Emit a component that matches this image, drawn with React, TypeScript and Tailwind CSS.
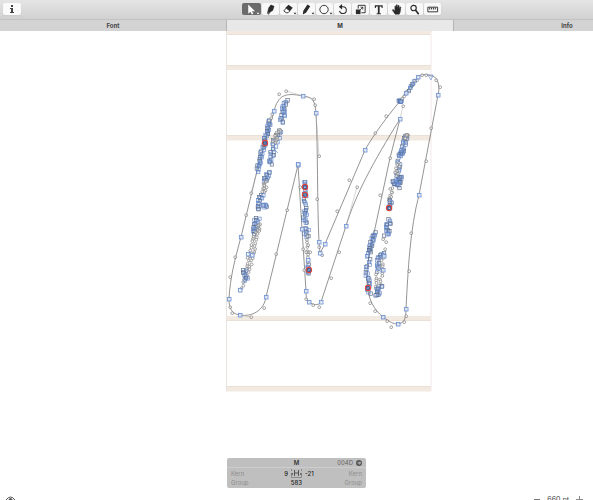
import { useState } from "react";
import type { ReactNode } from "react";

type Point = [number, number];

type Cluster = {
    path: Point[];
    count: number;
    spread: number;
    round?: boolean;
};

const OUTLINE =
    "M229 299C229 309 232 314 240 315C251 317 264 311 266 297L298 165L302 229L306 291C306 299 307 301 309 302" +
    "C313 305 318 306 321 302L346 226C355 196 373 162 400 119L390 158L374 233C371 248 366 265 367 283" +
    "C368 299 374 310 383 317C390 322 393 324 398 324C405 323 406 317 406 309C408 270 410 229 419 195L438 95" +
    "C441 84 436 75 431 76C425 73 420 75 418 77C411 84 406 93 400 101C387 117 374 134 365 150L325 244L320 253L319 242" +
    "C317 200 318 150 316 113C315 101 313 97 303 96C284 92 278 96 274 111L257 171L241 237C235 259 230 278 229 299Z";

const HANDLES = "M303 96L314 99M240 315L251 317M346 226L357 187M400 119L403 106M257 171L251 193M316 113L319 156M278 96L279 94M286 91L303 96";

const SQUARES: Point[] = [
    [229, 299], [240, 315], [266, 297], [302, 229], [306, 291], [309, 302], [321, 302],
    [346, 226], [400, 119], [383, 317], [398, 324], [406, 309], [419, 195], [438, 95],
    [418, 77], [365, 150], [325, 244], [320, 253], [319, 242], [316, 113], [303, 96],
    [274, 111], [241, 237], [240, 290], [252, 255], [248, 254], [308, 260], [383, 270],
    [384, 256], [406, 93], [298, 165], [298, 164],
];

const CIRCLES: Point[] = [
    [279, 94], [286, 91], [314, 99], [315, 105], [319, 156], [317, 199], [319, 247], [322, 255],
    [251, 193], [246, 215], [235, 257], [230, 277], [230, 307], [232, 313], [251, 317], [264, 308],
    [276, 254], [287, 210], [300, 187], [303, 249], [304, 270], [306, 299], [313, 305], [319, 307],
    [331, 278], [339, 252], [357, 187], [337, 211], [349, 180], [375, 133], [386, 116], [403, 106],
    [390, 158], [380, 195], [370, 303], [375, 311], [387, 321], [391, 327], [404, 322], [406, 316],
    [409, 271], [411, 233], [426, 161], [431, 128], [440, 87], [436, 80], [422, 75], [426, 75],
    [272, 114], [271, 118], [383, 239], [386, 242], [385, 249], [308, 245], [308, 252], [306, 252],
    [310, 252], [383, 317],
];

const CLUSTERS: Cluster[] = [
    // left stem, outer edge
    { path: [[270, 121], [264, 144], [257, 171]], count: 42, spread: 3 },
    // left stem, inner strokes
    { path: [[285, 101], [281, 122]], count: 20, spread: 5 },
    { path: [[279, 130], [273, 148], [269, 164]], count: 25, spread: 6 },
    { path: [[279, 130], [274, 142]], count: 14, spread: 5, round: true },
    { path: [[268, 172], [264, 182]], count: 11, spread: 5 },
    { path: [[266, 182], [262, 192]], count: 10, spread: 5, round: true },
    { path: [[261, 194], [258, 209]], count: 13, spread: 5 },
    { path: [[264, 206], [267, 206]], count: 5, spread: 3 },
    { path: [[257, 217], [255, 233]], count: 16, spread: 6 },
    { path: [[260, 224], [257, 232]], count: 8, spread: 3, round: true },
    { path: [[253, 236], [242, 288]], count: 20, spread: 2, round: true },
    { path: [[258, 231], [247, 278]], count: 17, spread: 2, round: true },
    { path: [[245, 269], [246, 280]], count: 9, spread: 6 },
    // middle
    { path: [[305, 182], [305, 207]], count: 13, spread: 3 },
    { path: [[305, 209], [305, 223]], count: 11, spread: 4 },
    { path: [[306, 228], [306, 237]], count: 8, spread: 5 },
    { path: [[307, 235], [308, 262]], count: 8, spread: 1, round: true },
    { path: [[308, 265], [308, 274]], count: 7, spread: 2 },
    // right arm
    { path: [[399, 101], [402, 101]], count: 9, spread: 3 },
    { path: [[402, 98], [418, 77]], count: 11, spread: 1, round: true },
    { path: [[409, 90], [414, 82]], count: 6, spread: 1 },
    // right stem, inner strokes
    { path: [[406, 135], [403, 150], [400, 156]], count: 24, spread: 4 },
    { path: [[406, 134], [405, 139]], count: 10, spread: 4, round: true },
    { path: [[399, 160], [397, 176]], count: 8, spread: 4 },
    { path: [[398, 162], [396, 178]], count: 9, spread: 4, round: true },
    { path: [[403, 176], [396, 184], [393, 181]], count: 17, spread: 5 },
    { path: [[400, 178], [399, 187]], count: 7, spread: 3 },
    { path: [[392, 188], [390, 205]], count: 11, spread: 4, round: true },
    { path: [[391, 200], [389, 209]], count: 7, spread: 3 },
    { path: [[390, 220], [386, 235]], count: 16, spread: 5 },
    { path: [[384, 254], [378, 259], [376, 271]], count: 15, spread: 4 },
    { path: [[383, 258], [380, 286]], count: 12, spread: 3, round: true },
    { path: [[376, 272], [376, 292]], count: 8, spread: 2, round: true },
    { path: [[380, 286], [377, 296]], count: 13, spread: 5 },
    // right stem, outer edge
    { path: [[374, 233], [369, 252]], count: 20, spread: 3 },
    { path: [[369, 253], [367, 275], [369, 293]], count: 22, spread: 4 },
];

const ERRORS: Point[] = [[265, 143], [305, 187], [305, 195], [309, 270], [389, 208], [368, 288]];

const TICKS = [
    "M287 101l2 2M276 151l2 2M302 181h5l-3 4zM303 183l4 8M256 229l4-3M262 203h5v6h-5zM244 283l5-5M398 162l3-4M303 211l4 4",
    "M303 222l5-4M308 275l2-2M403 135l5 4M402 152l3-10M428 75h5l-2 5zM386 233l4 3-2-6M376 268l3-6M393 183l8-6M394 180l7 5",
];

// fixed pseudo-random offset so that nodes keep their place between renders
function jitter(n: number) {
    const v = Math.sin(n * 12.9898) * 43758.5453;
    return v - Math.floor(v) - 0.5;
}

function spreadNodes({ path, count, spread }: Cluster, seed: number): Point[] {
    return Array.from({ length: count }, (_, i) => {
        const t = (i / Math.max(count - 1, 1)) * (path.length - 1);
        const k = Math.min(Math.floor(t), path.length - 2);
        const [x1, y1] = path[k];
        const [x2, y2] = path[k + 1];
        const f = t - k;
        return [
            x1 + (x2 - x1) * f + jitter(seed * 97 + i) * spread,
            y1 + (y2 - y1) * f + jitter(seed * 53 + i + 7) * 2,
        ];
    });
}

function Square({ at: [x, y] }: { at: Point }) {
    return <rect x={x - 1.6} y={y - 1.6} width={3.6} height={3.6} fill="#eef3fd" fillOpacity={0.6} stroke="#7396d6" strokeWidth={0.9} />;
}

function Circle({ at: [x, y] }: { at: Point }) {
    return <circle cx={x + 0.2} cy={y + 0.2} r={1.4} fill="#fff" fillOpacity={0.6} stroke="#808080" strokeWidth={0.7} />;
}

function GlyphCanvas() {
    return (
        <svg className="block shrink-0" width="593" height="461" viewBox="0 31 593 461" role="img" aria-label="Glyph outline">
            <g fill="#f2e9e1">
                <rect x="226" y="31" width="205" height="4" />
                <rect x="226" y="65" width="205" height="5" />
                <rect x="226" y="135" width="205" height="5.5" />
                <rect x="226" y="316" width="205" height="5" />
                <rect x="226" y="386" width="205" height="5.5" />
            </g>
            <path d="M226 34.5h205M226 65.5h205M226 135.5h205M226 320.5h205M226 386.5h205" stroke="#e8ddd3" strokeWidth="0.8" />
            <path d="M226.5 31V391" stroke="#e9e3df" />
            <path d="M431 31V391" stroke="#f3e9e7" />
            <path d={OUTLINE} fill="none" stroke="#666" strokeWidth="0.7" />
            <path d={HANDLES} fill="none" stroke="#aaa" strokeWidth="0.5" />
            {CLUSTERS.map((cluster, c) => (
                <g key={c}>
                    {spreadNodes(cluster, c + 1).map((p, i) =>
                        cluster.round ? (
                            <Circle key={i} at={p} />
                        ) : (
                            <rect key={i} x={p[0] - 1.5} y={p[1] - 1.5} width={3.4} height={3.4} fill="#b5c4e0" fillOpacity={0.2} stroke={i % 3 ? "#5c82c8" : "#56657f"} strokeWidth={0.6} />
                        )
                    )}
                </g>
            ))}
            {CIRCLES.map((p, i) => <Circle key={i} at={p} />)}
            {SQUARES.map((p, i) => <Square key={i} at={p} />)}
            {TICKS.map((d) => <path key={d} d={d} fill="none" stroke="#6f93d6" strokeWidth="0.7" />)}
            {ERRORS.map(([x, y], i) => (
                <g key={i}>
                    <circle cx={x} cy={y} r={2.6} fill="none" stroke="#e0453c" strokeWidth={1.1} />
                    <rect x={x - 1.3} y={y - 1.3} width={2.6} height={2.6} fill="none" stroke="#34508c" strokeWidth={0.8} />
                </g>
            ))}
        </svg>
    );
}

const caret = <path d="M14 10.500h3l-1.500 2z" fill="currentColor" />;

const tools: { name: string; icon: ReactNode }[] = [
    { name: "Select", icon: <><path d="M5 1.500v10l2.300-2 1.500 3 1.700-.8L9 8.800h3.300z" fill="currentColor" />{caret}</> },
    { name: "Draw", icon: <path d="M9 2l3.500 1.500L11 8l-3 2-1.500 2.500L6 12l1-3-1.500 2.500L5 11l1.500-6z" fill="currentColor" stroke="currentColor" strokeWidth="0.3" /> },
    { name: "Erase", icon: <><path d="M8.500 2L13 5l-3 4-5-3.500z" fill="currentColor" /><path d="M6 5.500l4 3-2 2H6L3.500 8.500z" fill="#fff" stroke="currentColor" strokeWidth="1" />{caret}</> },
    { name: "Pencil", icon: <><path d="M9.500 1.500l3 2-4.500 7-3.500 2 .5-4z" fill="currentColor" />{caret}</> },
    { name: "Primitives", icon: <><circle cx="8" cy="7" r="4.500" fill="none" stroke="currentColor" strokeWidth="1" />{caret}</> },
    { name: "Rotate", icon: <><path d="M7 4h2a3.700 3.700 0 1 1-3.700 4.500" fill="none" stroke="currentColor" strokeWidth="1.100" /><path d="M8 1v6L4.500 4z" fill="currentColor" /></> },
    { name: "Scale", icon: <><path d="M6 6V2.500h7.500v8h-4" fill="none" stroke="currentColor" strokeWidth="1" /><path d="M3.500 7h5v5h-5z" fill="currentColor" /><path d="M8 7.500l3-3M8.500 4.500H11V7" fill="none" stroke="currentColor" strokeWidth="0.9" /></> },
    { name: "Text", icon: <path d="M4.500 2.500h8.500v3h-1l-.5-1.700H9.700V11l1.500.3v.7H6.300v-.7l1.500-.3V3.800H6L5.500 5.500h-1z" fill="currentColor" /> },
    { name: "Hand", icon: <path d="M7 12L4 7.500l.8-.6L6.800 8.500V3.500h1V6l.5-4h1l.2 4 .8-3.200h1L11.200 6.500l1-2.200h.9L12.500 9.500l-1 2.500z" fill="currentColor" stroke="currentColor" strokeWidth="0.6" /> },
    { name: "Zoom", icon: <><circle cx="7.500" cy="5.500" r="2.900" fill="none" stroke="currentColor" strokeWidth="1.200" /><path d="M9.500 7.500l3.500 4.500" stroke="currentColor" strokeWidth="1.800" /></> },
    { name: "Measure", icon: <path d="M3.500 4.500h10.500v5H3.500zM5.500 5v2M7.500 5v2M9.500 5v2M11.500 5v2" fill="none" stroke="currentColor" strokeWidth="1" /> },
];

function Toolbar() {
    const [active, setActive] = useState("Select");
    return (
        <header className="flex h-[19px] shrink-0 items-start bg-linear-to-b from-[#e5e5e5] to-[#d1d1d1] pt-[3px] pl-[3px]">
            <button className="flex h-3 w-[18px] items-center justify-center rounded-xs bg-[#fafafa] text-[#444] shadow-xs" aria-label="Font info">
                <svg width="8" height="10" viewBox="0 0 8 10" fill="currentColor">
                    <path d="M3 1h2v2H3zM2 4h3v4h1v1H2V8h1V5H2z" />
                </svg>
            </button>
            <div className="ml-[221px] flex w-[196px] gap-px">
                {tools.map((tool) => (
                    <button
                        key={tool.name}
                        aria-label={tool.name}
                        onClick={() => setActive(tool.name)}
                        className={
                            tool.name === active
                                ? "flex h-3 w-[19px] shrink-0 justify-center rounded-xs bg-[#6b6b6b] text-white"
                                : "flex h-3 flex-1 justify-center rounded-xs bg-[#f8f8f8] text-[#2a2a2a] shadow-xs"
                        }
                    >
                        <svg className="shrink-0" width="17" height="13" viewBox="0 0 17 14">{tool.icon}</svg>
                    </button>
                ))}
            </div>
        </header>
    );
}

function Tabs() {
    const [current, setCurrent] = useState("M");
    return (
        <nav className="flex h-3 shrink-0 overflow-hidden border-t border-[#c2c2c2]">
            {["Font", "M", "Info"].map((tab) => (
                <button
                    key={tab}
                    onClick={() => setCurrent(tab)}
                    className={
                        tab === current
                            ? "w-[227px] shrink-0 border-r border-[#b5b5b5] bg-[#e8e8e8] text-[6px] leading-[12px] font-bold text-[#333]"
                            : "w-[227px] shrink-0 border-r border-[#b5b5b5] bg-[#d3d3d3] text-[6px] leading-[12px] font-bold text-[#444]"
                    }
                >
                    {tab}
                </button>
            ))}
        </nav>
    );
}

function GlyphInfo() {
    return (
        <form className="absolute bottom-1 left-[227px] w-[139px] overflow-hidden rounded-xs bg-[#bfbfbf] pb-px text-[6px] leading-[9px] text-[#222]">
            <div className="grid grid-cols-3 items-center border-b border-[#cdcdcd] px-1">
                <span />
                <input aria-label="Glyph name" defaultValue="M" className="w-full min-w-0 text-center font-medium" />
                <div className="flex items-center justify-end gap-[3px] text-[#666]">
                    <span>004D</span>
                    <button type="button" aria-label="Open glyph">
                        <svg className="block" width="6" height="6" viewBox="0 0 6 6">
                            <circle cx="3" cy="3" r="3" fill="#555" />
                            <path d="M1.500 3h3M3.200 1.700L4.500 3 3.200 4.300" fill="none" stroke="#ddd" strokeWidth="0.8" />
                        </svg>
                    </button>
                </div>
            </div>
            <div className="grid grid-cols-3 items-center px-1 pt-px">
                <input aria-label="Left kerning" placeholder="Kern" className="w-full min-w-0 placeholder:text-[#8c8c8c]" />
                <div className="flex items-center justify-center gap-[3px] font-medium">
                    <input aria-label="Left sidebearing" defaultValue="9" className="w-3 text-right" />
                    <svg className="shrink-0" width="11" height="9" viewBox="0 0 11 9" fill="none" stroke="#555">
                        <path d="M3.500 1v6M7.500 1v6M3.500 4h4" />
                        <path d="M.5 6v2.500h10V6M.5 2V0M10.500 2V0" stroke="#777" strokeWidth="0.7" />
                        <path d="M0 5h2M9 5h2" stroke="#222" />
                    </svg>
                    <input aria-label="Right sidebearing" defaultValue="-21" className="w-3" />
                </div>
                <input aria-label="Right kerning" placeholder="Kern" className="w-full min-w-0 text-right placeholder:text-[#8c8c8c]" />
                <input aria-label="Left group" placeholder="Group" className="w-full min-w-0 placeholder:text-[#8c8c8c]" />
                <input aria-label="Width" defaultValue="583" className="w-full min-w-0 text-center font-medium" />
                <input aria-label="Right group" placeholder="Group" className="w-full min-w-0 text-right placeholder:text-[#8c8c8c]" />
            </div>
        </form>
    );
}

function StatusBar() {
    return (
        <footer className="flex h-2 shrink-0 items-start justify-between overflow-hidden bg-white pr-[10px] pl-[5px] text-[#444]">
            <button aria-label="Preview" className="pt-1">
                <svg className="block" width="11" height="8" viewBox="0 0 11 8" fill="none" stroke="#555">
                    <path d="M1 4q4.500-6 9 0q-4.500 6-9 0z" />
                    <circle cx="5.500" cy="4" r="1.500" fill="#555" />
                </svg>
            </button>
            <div className="flex items-start gap-[7px] pt-[3px] text-[7px] leading-[9px]">
                <button aria-label="Zoom out" className="pt-1">
                    <svg className="block" width="6" height="1" viewBox="0 0 6 1"><path d="M0 .5h6" stroke="#777" /></svg>
                </button>
                <span>660 pt</span>
                <button aria-label="Zoom in" className="pt-px">
                    <svg className="block" width="7" height="7" viewBox="0 0 7 7"><path d="M0 3.500h7M3.500 0v7" stroke="#888" /></svg>
                </button>
            </div>
        </footer>
    );
}

export default function App() {
    return (
        <div className="flex h-screen flex-col overflow-hidden bg-white font-['Inter','Liberation_Sans',sans-serif]">
            <Toolbar />
            <Tabs />
            <main className="relative flex-1 overflow-hidden">
                <GlyphCanvas />
                <GlyphInfo />
            </main>
            <StatusBar />
        </div>
    );
}
